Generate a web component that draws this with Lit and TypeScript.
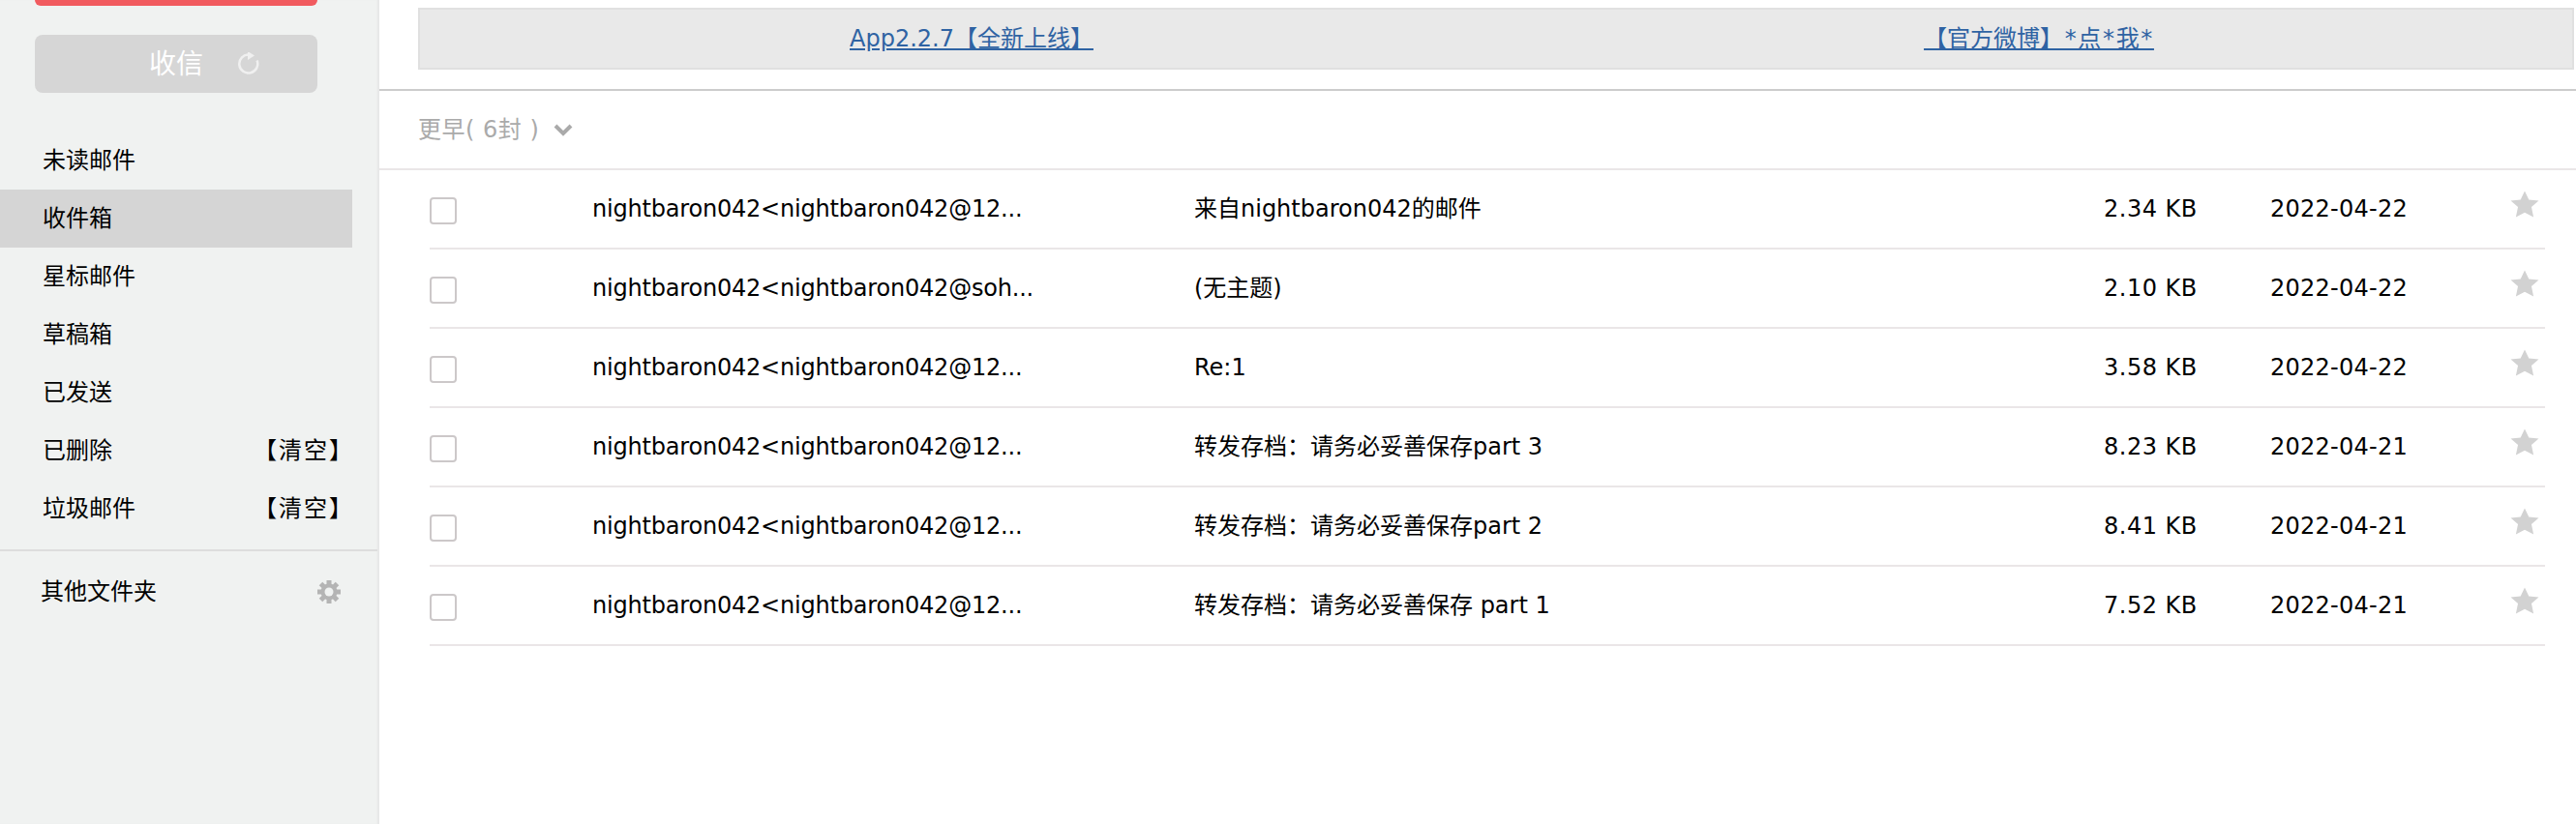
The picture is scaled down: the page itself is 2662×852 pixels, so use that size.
import { LitElement, html, css, svg } from 'lit';
import { customElement } from 'lit/decorators.js';

const folders = [
  { name: '未读邮件' },
  { name: '收件箱', active: true },
  { name: '星标邮件' },
  { name: '草稿箱' },
  { name: '已发送' },
  { name: '已删除', clear: true },
  { name: '垃圾邮件', clear: true },
];

const mails = [
  ['nightbaron042<nightbaron042@12...', '来自nightbaron042的邮件', '2.34 KB', '2022-04-22'],
  ['nightbaron042<nightbaron042@soh...', '(无主题)', '2.10 KB', '2022-04-22'],
  ['nightbaron042<nightbaron042@12...', 'Re:1', '3.58 KB', '2022-04-22'],
  ['nightbaron042<nightbaron042@12...', '转发存档：请务必妥善保存part 3', '8.23 KB', '2022-04-21'],
  ['nightbaron042<nightbaron042@12...', '转发存档：请务必妥善保存part 2', '8.41 KB', '2022-04-21'],
  ['nightbaron042<nightbaron042@12...', '转发存档：请务必妥善保存 part 1', '7.52 KB', '2022-04-21'],
];

const star = svg`<path d="M14 .5l4 9 9.500 1-7 6.500 2 10.500-8.500-4.800-8.500 4.800 2-10.500-7-6.500 9.500-1z" fill="#d2d2d2"/>`;
const teeth = [0, 45, 90, 135].map(
  (a) => svg`<rect x="9.500" y="0" width="5" height="24" fill="#b4b4b4" transform="rotate(${a} 12 12)"/>`
);

@customElement('app-root')
export class AppRoot extends LitElement {
  static styles = css`
    :host {
      display: flex;
      height: 852px;
      overflow: hidden;
      background: #fff;
      color: #000;
      font: 24px/30px 'DejaVu Sans', 'Noto Sans CJK SC', sans-serif;
    }

    .sidebar {
      flex: none;
      width: 392px;
      box-sizing: border-box;
      background: #f0f2f1;
      box-shadow: inset -3px 0 2px -1px #e6e6e6;
    }
    .compose {
      width: 292px;
      height: 6px;
      margin-left: 36px;
      background: #f15b5f;
      border-radius: 0 0 8px 8px;
    }
    .fetch {
      display: flex;
      align-items: center;
      width: 292px;
      height: 60px;
      margin: 30px 0 40px 36px;
      padding-left: 118px;
      box-sizing: border-box;
      background: #d6d6d6;
      border-radius: 8px;
      color: #fff;
      font-size: 28px;
    }
    .fetch span {
      padding-top: 2px;
    }
    .fetch svg {
      margin-left: 35px;
    }
    .nav-item {
      display: flex;
      justify-content: space-between;
      align-items: center;
      width: 364px;
      height: 60px;
      box-sizing: border-box;
      padding: 0 10px 0 44px;
    }
    .nav-item.active {
      background: #d5d5d5;
    }
    .clear {
      margin-right: -12px;
      letter-spacing: 2px;
    }
    .divider {
      width: 390px;
      height: 2px;
      margin-top: 12px;
      background: #dddddd;
    }
    .other {
      display: flex;
      justify-content: space-between;
      align-items: center;
      height: 84px;
      padding: 0 40px 0 42px;
    }

    .main {
      flex: 1;
      min-width: 0;
    }
    .notice {
      display: grid;
      grid-template-columns: 1140px 1066px;
      justify-items: center;
      align-items: center;
      height: 64px;
      box-sizing: border-box;
      margin: 8px 2px 20px 40px;
      background: #e9e9e9;
      border: 2px solid #e0e0e0;
    }
    .notice a {
      color: #2f63a3;
      text-decoration: underline;
    }
    .wide {
      letter-spacing: 1.650px;
    }
    .rule {
      height: 2px;
      background: #cccccc;
    }
    .section {
      display: flex;
      align-items: center;
      gap: 15px;
      height: 80px;
      padding-left: 40px;
      border-bottom: 2px solid #eae6e7;
      color: #aaaaaa;
    }
    .section span {
      letter-spacing: 0.500px;
    }
    .row {
      display: grid;
      grid-template-columns: 168px 622px 940px 172px 248px 30px;
      align-items: center;
      width: 2186px;
      height: 82px;
      box-sizing: border-box;
      margin-left: 52px;
      border-bottom: 2px solid #eae6e7;
    }
    .check {
      align-self: start;
      width: 28px;
      height: 28px;
      margin-top: 28px;
      box-sizing: border-box;
      border: 2px solid #ccc8c9;
      border-radius: 4px;
      background: #fff;
    }
    .row svg {
      align-self: start;
      margin-top: 21px;
    }
    .cell {
      white-space: nowrap;
    }
    .sender {
      letter-spacing: -0.200px;
    }
    .size {
      letter-spacing: 0.500px;
    }
    .date {
      letter-spacing: 0.250px;
    }
  `;

  render() {
    return html`
      <aside class="sidebar">
        <div class="compose"></div>
        <div class="fetch">
          <span>收信</span>
          <svg width="24" height="24" viewBox="0 0 24 24" fill="none">
            <path d="M20.600 8.500A9.500 9.500 0 1 1 12 2.500" stroke="#f0f0f0" stroke-width="2.500"/>
            <path d="M11 -1l7 4.500-7 4.500z" fill="#f0f0f0"/>
          </svg>
        </div>
        ${folders.map(
          (f) => html`
            <div class="nav-item ${f.active ? 'active' : ''}">
              <span>${f.name}</span>
              ${f.clear ? html`<span class="clear">【清空】</span>` : ''}
            </div>
          `
        )}
        <div class="divider"></div>
        <div class="other">
          <span>其他文件夹</span>
          <svg width="24" height="24" viewBox="0 0 24 24">
            ${teeth}
            <circle cx="12" cy="12" r="8.500" fill="#b4b4b4"/>
            <circle cx="12" cy="12" r="4.500" fill="#f0f2f1"/>
          </svg>
        </div>
      </aside>
      <main class="main">
        <div class="notice">
          <a>App2.2.7【全新上线】</a>
          <a>【官方微博<span class="wide">】*点*我*</span></a>
        </div>
        <div class="rule"></div>
        <div class="section">
          <span>更早( 6封 )</span>
          <svg width="20" height="14" viewBox="0 0 20 14" fill="none">
            <path d="M2 3l8 8 8-8" stroke="#aaaaaa" stroke-width="4"/>
          </svg>
        </div>
        ${mails.map(
          (m) => html`
            <div class="row">
              <div class="check"></div>
              <div class="cell sender">${m[0]}</div>
              <div class="cell">${m[1]}</div>
              <div class="cell size">${m[2]}</div>
              <div class="cell date">${m[3]}</div>
              <svg width="30" height="28" viewBox="0 0 28 28" preserveAspectRatio="none">${star}</svg>
            </div>
          `
        )}
      </main>
    `;
  }
}
